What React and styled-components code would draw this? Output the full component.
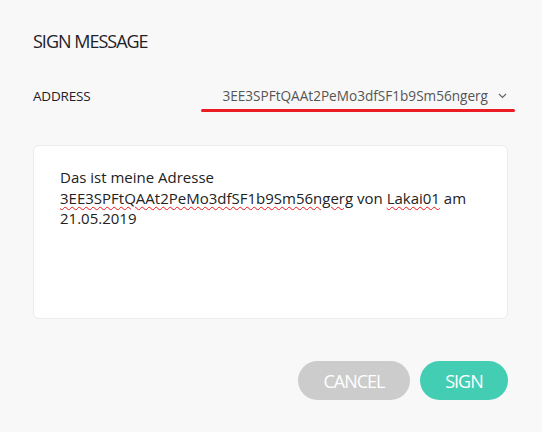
import React from 'react'
import styled, { createGlobalStyle } from 'styled-components'

const GlobalStyle = createGlobalStyle`
  html, body {
    margin: 0;
    padding: 0;
    background: #f8f8f8;
  }
  body {
    font-family: "Open Sans", "Liberation Sans", sans-serif;
    color: #222;
  }
`

const Dialog = styled.div`
  width: 542px;
  height: 432px;
  box-sizing: border-box;
  padding: 30px 34px 0 33px;
  background: #f8f8f8;
`

const Title = styled.h2`
  margin: 0;
  font-size: 18px;
  font-weight: 400;
  letter-spacing: -1px;
  color: #1f2129;
  line-height: 22px;
`

const AddressRow = styled.div`
  display: flex;
  align-items: flex-start;
  justify-content: space-between;
  margin-top: 35px;
  line-height: 18px;
`

const Label = styled.span`
  font-size: 13.5px;
  letter-spacing: -0.2px;
  color: #1f2129;
`

const Select = styled.div`
  display: flex;
  flex-direction: column;
  width: 314px;
  margin-right: -7px;
`

const SelectValue = styled.div`
  display: flex;
  align-items: center;
  justify-content: flex-end;
  gap: 10px;
  padding: 0 8px 4px 0;
  font-size: 13.6px;
  color: #555;
`

const Underline = styled.div`
  height: 3px;
  border-radius: 2px;
  background: #ec1c24;
`

const Chevron = () => (
  <svg width="9" height="6" viewBox="0 0 9 6" fill="none">
    <path d="M1 1l3.5 3.5L8 1" stroke="#666" strokeWidth="1.2" />
  </svg>
)

const Card = styled.div`
  margin-top: 33px;
  width: 475px;
  height: 174px;
  box-sizing: border-box;
  background: #fff;
  border: 1px solid #ececec;
  border-radius: 6px;
  padding: 21px 26px;
  font-size: 15px;
  line-height: 20.5px;
  color: #222;
`

const Misspelled = styled.span`
  text-decoration: underline wavy #e8161b;
  text-decoration-thickness: 1px;
  text-underline-offset: 2px;
`

const Actions = styled.div`
  display: flex;
  justify-content: flex-end;
  gap: 10px;
  width: 475px;
  margin-top: 42px;
`

const Button = styled.button`
  height: 39px;
  width: ${p => p.$w}px;
  border: none;
  border-radius: 20px;
  background: ${p => p.$bg};
  color: #fff;
  font-family: "Open Sans", "Liberation Sans", sans-serif;
  font-size: 18px;
  letter-spacing: -1px;
  padding: 0;
  cursor: pointer;
`

export default function App() {
  return (
    <Dialog>
      <GlobalStyle />
      <Title>SIGN MESSAGE</Title>
      <AddressRow>
        <Label>ADDRESS</Label>
        <Select>
          <SelectValue>
            <span>3EE3SPFtQAAt2PeMo3dfSF1b9Sm56ngerg</span>
            <Chevron />
          </SelectValue>
          <Underline />
        </Select>
      </AddressRow>
      <Card>
        Das ist meine Adresse{' '}
        <Misspelled>3EE3SPFtQAAt2PeMo3dfSF1b9Sm56ngerg</Misspelled> von{' '}
        <Misspelled>Lakai01</Misspelled> am 21.05.2019
      </Card>
      <Actions>
        <Button $w={112} $bg="#cccccc">CANCEL</Button>
        <Button $w={88} $bg="#43ceb4">SIGN</Button>
      </Actions>
    </Dialog>
  )
}
